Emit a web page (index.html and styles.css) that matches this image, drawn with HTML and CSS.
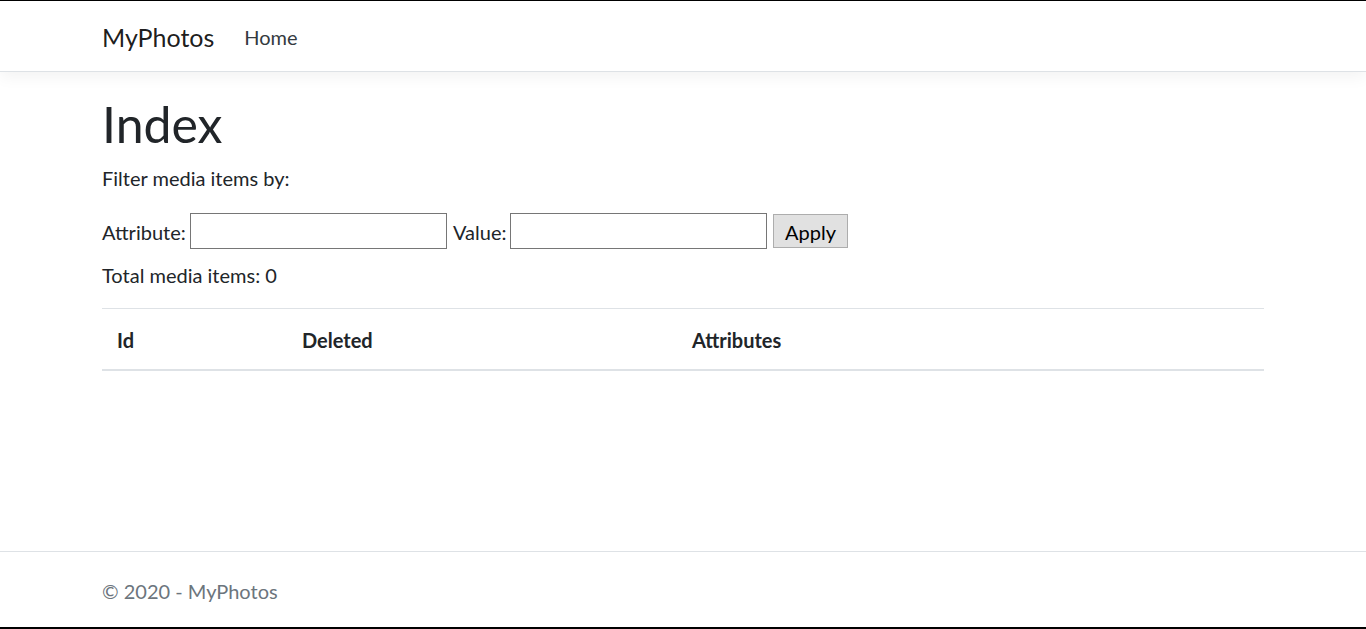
FILE: index.html
```html
<!DOCTYPE html>
<html lang="en">
<head>
<meta charset="utf-8">
<title>Index - MyPhotos</title>
<link rel="stylesheet" href="styles.css">
</head>
<body>
<header class="site-header">
  <nav class="navbar">
    <div class="container nav-inner">
      <a class="brand" href="#">MyPhotos</a>
      <ul class="nav-list">
        <li><a class="nav-link" href="#">Home</a></li>
      </ul>
    </div>
  </nav>
</header>
<main class="container main">
  <h1 class="title">Index</h1>
  <p class="intro">Filter media items by:</p>
  <form class="filter">
    <label class="lbl lbl-attr" for="attr">Attribute:</label>
    <input class="field" id="attr" type="text">
    <label class="lbl lbl-val" for="val">Value:</label>
    <input class="field" id="val" type="text">
    <button class="btn" type="button">Apply</button>
  </form>
  <p class="total">Total media items: 0</p>
  <table class="table">
    <thead>
      <tr>
        <th class="col-id">Id</th>
        <th class="col-del">Deleted</th>
        <th>Attributes</th>
      </tr>
    </thead>
    <tbody></tbody>
  </table>
</main>
<footer class="footer">
  <div class="container">&copy; 2020 - MyPhotos</div>
</footer>
</body>
</html>
```
FILE: styles.css
```css
* { box-sizing: border-box; }
html, body { margin: 0; padding: 0; }
body {
  height: 100vh;
  display: flex;
  flex-direction: column;
  border-top: 1px solid #000;
  border-bottom: 2px solid #000;
  font-family: Lato, "Open Sans", sans-serif;
  font-size: 20px;
  line-height: 30px;
  color: #212529;
  background: #fff;
  overflow: hidden;
}
.container {
  width: 100%;
  max-width: 1200px;
  margin: 0 auto;
  padding: 0 19px;
}
.site-header { margin-bottom: 20px; }
.navbar {
  padding: 10px 0;
  border-bottom: 1px solid #dee2e6;
  box-shadow: 0 5px 15px rgba(0,0,0,.05);
  background: #fff;
}
.nav-inner { display: flex; align-items: center; }
.brand {
  font-size: 25px;
  line-height: 37.5px;
  padding: 7.5px 0 5px;
  margin-right: 20px;
  color: rgba(0,0,0,.9);
  text-decoration: none;
}
.nav-list { list-style: none; margin: 0; padding: 0; display: flex; }
.nav-link {
  display: block;
  padding: 11px 10px 9px;
  color: #343a40;
  text-decoration: none;
}
.main { flex: 1; }
.title {
  margin: 0 0 10px;
  padding-top: 2px;
  height: 60px;
  font-size: 50px;
  line-height: 60px;
  font-weight: 400;
}
.intro { margin: 0 0 20px; padding-top: 1px; height: 30px; }
.filter {
  display: flex;
  align-items: center;
  height: 37px;
  margin-bottom: 10px;
}
.lbl { display: block; padding-top: 2px; }
.lbl-attr { width: 88px; }
.lbl-val { width: 57px; margin-left: 6px; }
.field {
  width: 257px;
  height: 36px;
  border: 1px solid #767676;
  padding: 1px 2px;
  font: inherit;
  background: #fff;
}
.btn {
  margin-left: 6px;
  height: 34px;
  padding: 2px 11px 0;
  border: 1px solid #adadad;
  background: #e1e1e1;
  color: #000;
  font: inherit;
  line-height: 30px;
}
.total { margin: 0 0 19px; padding-top: 1px; height: 30px; }
.table {
  width: 100%;
  border-collapse: collapse;
}
.table th {
  text-align: left;
  font-weight: 700;
  padding: 16px 15px 14px;
  vertical-align: bottom;
  border-top: 1px solid #dee2e6;
  border-bottom: 2px solid #dee2e6;
}
.col-id { width: 185px; }
.col-del { width: 390px; }
.footer {
  border-top: 1px solid #dee2e6;
  line-height: 75px;
  color: #6c757d;
  white-space: nowrap;
}
.footer .container { padding-top: 2px; height: 75px; }
```
